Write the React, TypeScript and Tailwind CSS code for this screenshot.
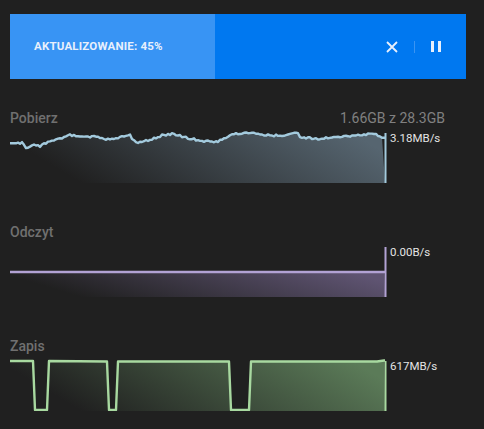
import React from 'react';

// download rate trace, hand-picked from the screenshot (svg coords)
const downloadBase: [number, number][] = [
  [0, 12.3], [13, 11.7], [16.7, 17.3], [21.7, 14], [30, 15], [38, 10.7], [48, 8.3],
  [60, 4], [73, 6.3], [87, 5.7], [100, 9], [120, 4], [125, 11.7], [140, 9],
  [153, 4], [162, 3], [173, 5.7], [190, 9.7], [207, 10.7], [220, 4], [230, 2.3],
  [242, 1.7], [257, 4], [273, 5], [287, 1.3], [290, 5.7], [310, 8.3], [323, 5.7],
  [340, 5], [353, 3.7], [365, 2.3], [373, 7.3],
];

function jitter(i: number) {
  const s = Math.sin(i * 12.9898) * 43758.5453;
  return (s - Math.floor(s) - 0.5) * 2;
}

function buildDownload() {
  const pts: string[] = [];
  for (let x = 0; x <= 373; x += 2) {
    let j = 0;
    while (j < downloadBase.length - 2 && downloadBase[j + 1][0] < x) j++;
    const [x0, y0] = downloadBase[j];
    const [x1, y1] = downloadBase[j + 1];
    const t = Math.min(1, Math.max(0, (x - x0) / (x1 - x0)));
    const y = y0 + (y1 - y0) * t + (x > 4 && x < 370 ? jitter(x) : 0);
    pts.push(`${x},${y.toFixed(1)}`);
  }
  return pts;
}

const writePts = [
  '0,2', '23,2', '25,51', '37,51', '39,2', '97,2.5', '99,51', '106,51', '108,2.5',
  '219,2.5', '221,51', '239,51', '241,2.5', '367,2.5', '374,1.5',
];

type ChartProps = {
  id: string;
  points: string[];
  line: string;
  fill: string;
  rate: string;
};

const Chart: React.FC<ChartProps> = ({ id, points, line, fill, rate }) => {
  const last = points[points.length - 1];
  const area = `M${points.join(' L')} L375,52 L0,52 Z`;
  return (
    <div className="flex">
      <svg width="377" height="52" viewBox="0 0 377 52" className="block shrink-0">
        <defs>
          <linearGradient id={id} x1="0.1" y1="0.6" x2="1" y2="0.4">
            <stop offset="0" stopColor={fill} stopOpacity="0" />
            <stop offset="1" stopColor={fill} stopOpacity="1" />
          </linearGradient>
        </defs>
        <path d={area} fill={`url(#${id})`} />
        <polyline
          points={points.join(' ') + ` 375,${last.split(',')[1]}`}
          fill="none"
          stroke={line}
          strokeWidth="2.4"
          strokeLinejoin="round"
        />
        <line x1="375.5" y1="2" x2="375.5" y2="52" stroke={line} strokeWidth="2" />
      </svg>
      <div className="ml-[3px] text-[11.5px] leading-[14px] text-[#e4e4e4]">{rate}</div>
    </div>
  );
};

const Section: React.FC<{ title: string; right?: string; children: React.ReactNode }> = ({ title, right, children }) => (
  <div className="mt-10 first:mt-[30px] w-[435px]">
    <div className="flex justify-between text-[14px] leading-[18px] font-medium text-[#707070] mb-1">
      <span>{title}</span>
      {right && <span className="font-normal text-[#808080]">{right}</span>}
    </div>
    {children}
  </div>
);

const App: React.FC = () => {
  const download = buildDownload();
  return (
    <div className="w-[484px] h-[429px] bg-[#202020] overflow-hidden px-[10px] pt-[14px]" style={{ fontFamily: 'Roboto, "Liberation Sans", sans-serif' }}>
      {/* update banner */}
      <div className="flex h-[65px] w-[456px] bg-[#0078f0]">
        <div className="w-[205px] bg-[#3894f4] flex items-center pl-6">
          <span className="text-[11.5px] font-bold tracking-[0.2px] text-[#e8f0fc]">AKTUALIZOWANIE: 45%</span>
        </div>
        <div className="flex-1 flex items-center justify-end pr-[25px]">
          <svg width="12" height="12" viewBox="0 0 12 12">
            <path d="M1 1 L11 11 M11 1 L1 11" stroke="#e8f0fc" strokeWidth="1.8" />
          </svg>
          <div className="w-px h-[12px] bg-[#3a94f2] ml-[16px] mr-[16px]" />
          <div className="flex gap-[4px]">
            <div className="w-[3px] h-[11px] bg-[#e8f0fc]" />
            <div className="w-[3px] h-[11px] bg-[#e8f0fc]" />
          </div>
        </div>
      </div>

      <div className="flex flex-col">
        <Section title="Pobierz" right="1.66GB z 28.3GB">
          <Chart id="g-down" points={download} line="#a3cadd" fill="#566570" rate="3.18MB/s" />
        </Section>
        <Section title="Odczyt">
          <Chart id="g-read" points={['0,27', '374,27']} line="#b2a2d4" fill="#5f5472" rate="0.00B/s" />
        </Section>
        <Section title="Zapis">
          <Chart id="g-write" points={writePts} line="#a8d9a0" fill="#5b7b58" rate="617MB/s" />
        </Section>
      </div>
    </div>
  );
};

export default App;
